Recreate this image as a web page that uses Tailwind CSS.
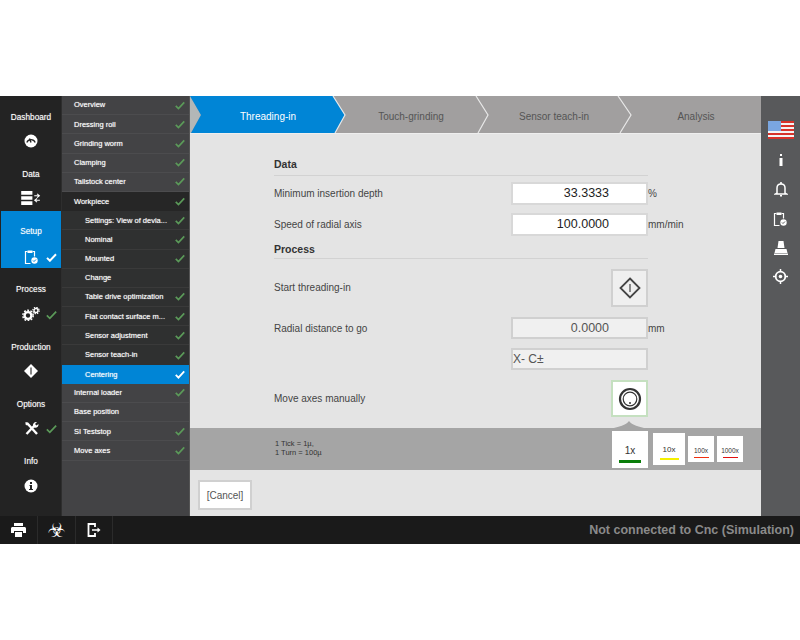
<!DOCTYPE html>
<html lang="en">

<head>
    <meta charset="UTF-8">
    <title>Threading-in</title>
    <script src="https://cdn.jsdelivr.net/npm/@tailwindcss/browser@4"></script>
</head>

<body class="bg-white font-['Liberation_Sans',Arial,sans-serif]">
    <main class="mt-[96px] w-[800px] h-[448px] flex flex-col">
        <div class="h-[420px] flex">
            <!-- main nav -->
            <nav class="w-[62px] bg-[#232323] text-white text-[8.250px] [text-shadow:0_0_1px_#ffffff80] flex flex-col pl-px border-r border-[#2e2e2e]">
                <div class="h-[57px] flex flex-col items-center pt-[15px]">
                    <span class="h-3 mt-px leading-3">Dashboard</span>
                    <svg class="mt-[10px]" width="14" height="14" viewBox="0 0 14 14"><circle cx="7" cy="7" r="6.500" fill="#fff"/><path d="M2.800 8.500A4.500 4.500 0 0 1 11.200 8.500" fill="none" stroke="#232323" stroke-width="1.200"/><path d="M7 8.500 L5.500 4.500" stroke="#232323" stroke-width="1.400"/></svg>
                </div>
                <div class="h-[57px] flex flex-col items-center pt-[15px]">
                    <span class="h-3 mt-px leading-3">Data</span>
                    <svg class="mt-[10px]" width="20" height="14" viewBox="0 0 21 15"><path d="M0 0h12v4H0zM0 5.500h12v4H0zM0 11h12v4H0z" fill="#fff"/><path d="M14 5h5M17 3l2.500 2-2.500 2M20 10h-5M17 8l-2.500 2 2.500 2" fill="none" stroke="#fff" stroke-width="1.100"/></svg>
                </div>
                <div class="h-[57px] mt-px bg-[#0085d6] flex flex-col items-center pt-[15px]">
                    <span class="h-3 leading-3">Setup</span>
                    <div class="mt-[11px] h-4 w-full relative flex justify-center">
                        <svg width="15" height="15" viewBox="0 0 15 15"><path d="M3.500 2.500H1.500v12h5M8.500 2.500h2v5" fill="none" stroke="#fff" stroke-width="1.200"/><path d="M3.500 1.500h5v2.500h-5z" fill="#fff"/><circle cx="10.500" cy="11.500" r="3.200" fill="#fff"/><path d="M9 11.500l1 1 2-2" fill="none" stroke="#0085d6" stroke-width="1"/></svg>
                        <svg class="absolute right-[4px] top-[4px]" width="11" height="9" viewBox="0 0 13 11"><path d="M1 6l3.500 3.500L12 1.500" fill="none" stroke="#fff" stroke-width="2.400"/></svg>
                    </div>
                </div>
                <div class="h-[56px] flex flex-col items-center pt-[16px]">
                    <span class="h-3 leading-3">Process</span>
                    <div class="mt-[11px] h-4 w-full relative flex justify-center">
                        <svg width="18" height="14" viewBox="0 0 18 14"><circle cx="6" cy="8.500" r="3.400" fill="none" stroke="#fff" stroke-width="2.400"/><circle cx="6" cy="8.500" r="5.200" fill="none" stroke="#fff" stroke-width="1.500" stroke-dasharray="1.800 1.500"/><circle cx="14" cy="3.500" r="2" fill="none" stroke="#fff" stroke-width="1.400"/><circle cx="14" cy="3.500" r="3.200" fill="none" stroke="#fff" stroke-width="1.200" stroke-dasharray="1.400 1.100"/></svg>
                        <svg class="absolute right-[4px] top-[3px]" width="11" height="10" viewBox="0 0 13 11"><path d="M1 6l3.500 3.500L12 1.500" fill="none" stroke="#5b9a59" stroke-width="2"/></svg>
                    </div>
                </div>
                <div class="h-[57px] flex flex-col items-center pt-[18px]">
                    <span class="h-3 leading-3">Production</span>
                    <svg class="mt-[10px]" width="14" height="14" viewBox="0 0 14 14"><path d="M7 0l7 7-7 7-7-7z" fill="#fff"/><path d="M7 3.500v7" stroke="#232323" stroke-width="1.100"/></svg>
                </div>
                <div class="h-[57px] flex flex-col items-center pt-[18px]">
                    <span class="h-3 leading-3">Options</span>
                    <div class="mt-[10px] h-4 w-full relative flex justify-center">
                        <svg width="15" height="15" viewBox="0 0 15 15"><path d="M3 2l10 11" stroke="#fff" stroke-width="2.400"/><path d="M1.500 1l2 .5 1 2-1.500 1-1.500-1z" fill="#fff"/><path d="M2.500 13L10 5" stroke="#fff" stroke-width="2.400"/><path d="M9 5c-.5-2.500 1.500-4.500 4-4l-2 2 1.500 1.500 2-1.500c.3 2.500-2 4.500-4.500 3.500z" fill="#fff"/></svg>
                        <svg class="absolute right-[4px] top-[3px]" width="11" height="10" viewBox="0 0 13 11"><path d="M1 6l3.500 3.500L12 1.500" fill="none" stroke="#5b9a59" stroke-width="2"/></svg>
                    </div>
                </div>
                <div class="h-[57px] flex flex-col items-center pt-[18px]">
                    <span class="h-3 leading-3">Info</span>
                    <svg class="mt-[11px]" width="14" height="14" viewBox="0 0 14 14"><circle cx="7" cy="7" r="6.500" fill="#fff"/><path d="M6 3h2v2H6zM5.500 6H8v4h1v1H5v-1h1V7h-.500z" fill="#232323"/></svg>
                </div>
            </nav>

            <!-- sub nav -->
            <aside class="w-[128px] bg-[#434345] text-white text-[7.500px] whitespace-nowrap [text-shadow:0_0_1px_#ffffffb0] border-r-[1px] border-[#555]">
                <div class="h-[19.200px] flex items-center justify-between pl-3 pr-[4px] border-b border-[#4c4c4e]"><span>Overview</span><svg width="10" height="9" viewBox="0 0 13 11"><path d="M1 6l3.500 3.500L12 1.500" fill="none" stroke="#5b9a59" stroke-width="2.200"/></svg></div>
                <div class="h-[19.200px] flex items-center justify-between pl-3 pr-[4px] border-b border-[#4c4c4e]"><span>Dressing roll</span><svg width="10" height="9" viewBox="0 0 13 11"><path d="M1 6l3.500 3.500L12 1.500" fill="none" stroke="#5b9a59" stroke-width="2.200"/></svg></div>
                <div class="h-[19.200px] flex items-center justify-between pl-3 pr-[4px] border-b border-[#4c4c4e]"><span>Grinding worm</span><svg width="10" height="9" viewBox="0 0 13 11"><path d="M1 6l3.500 3.500L12 1.500" fill="none" stroke="#5b9a59" stroke-width="2.200"/></svg></div>
                <div class="h-[19.200px] flex items-center justify-between pl-3 pr-[4px] border-b border-[#4c4c4e]"><span>Clamping</span><svg width="10" height="9" viewBox="0 0 13 11"><path d="M1 6l3.500 3.500L12 1.500" fill="none" stroke="#5b9a59" stroke-width="2.200"/></svg></div>
                <div class="h-[19.200px] flex items-center justify-between pl-3 pr-[4px] border-b border-[#4c4c4e]"><span>Tailstock center</span><svg width="10" height="9" viewBox="0 0 13 11"><path d="M1 6l3.500 3.500L12 1.500" fill="none" stroke="#5b9a59" stroke-width="2.200"/></svg></div>
                <div class="h-[19.200px] flex items-center justify-between pl-3 pr-[4px] bg-[#262626]"><span>Workpiece</span><svg width="10" height="9" viewBox="0 0 13 11"><path d="M1 6l3.500 3.500L12 1.500" fill="none" stroke="#5b9a59" stroke-width="2.200"/></svg></div>
                <div class="h-[19.200px] flex items-center justify-between pl-[23px] pr-[4px] bg-[#2f3030] border-b border-[#3a3a3a]"><span>Settings: View of devia...</span><svg width="10" height="9" viewBox="0 0 13 11"><path d="M1 6l3.500 3.500L12 1.500" fill="none" stroke="#5b9a59" stroke-width="2.200"/></svg></div>
                <div class="h-[19.200px] flex items-center justify-between pl-[23px] pr-[4px] bg-[#2f3030] border-b border-[#3a3a3a]"><span>Nominal</span><svg width="10" height="9" viewBox="0 0 13 11"><path d="M1 6l3.500 3.500L12 1.500" fill="none" stroke="#5b9a59" stroke-width="2.200"/></svg></div>
                <div class="h-[19.200px] flex items-center justify-between pl-[23px] pr-[4px] bg-[#2f3030] border-b border-[#3a3a3a]"><span>Mounted</span><svg width="10" height="9" viewBox="0 0 13 11"><path d="M1 6l3.500 3.500L12 1.500" fill="none" stroke="#5b9a59" stroke-width="2.200"/></svg></div>
                <div class="h-[19.200px] flex items-center justify-between pl-[23px] pr-[4px] bg-[#2f3030] border-b border-[#3a3a3a]"><span>Change</span></div>
                <div class="h-[19.200px] flex items-center justify-between pl-[23px] pr-[4px] bg-[#2f3030] border-b border-[#3a3a3a]"><span>Table drive optimization</span><svg width="10" height="9" viewBox="0 0 13 11"><path d="M1 6l3.500 3.500L12 1.500" fill="none" stroke="#5b9a59" stroke-width="2.200"/></svg></div>
                <div class="h-[19.200px] flex items-center justify-between pl-[23px] pr-[4px] bg-[#2f3030] border-b border-[#3a3a3a]"><span>Flat contact surface m...</span><svg width="10" height="9" viewBox="0 0 13 11"><path d="M1 6l3.500 3.500L12 1.500" fill="none" stroke="#5b9a59" stroke-width="2.200"/></svg></div>
                <div class="h-[19.200px] flex items-center justify-between pl-[23px] pr-[4px] bg-[#2f3030] border-b border-[#3a3a3a]"><span>Sensor adjustment</span><svg width="10" height="9" viewBox="0 0 13 11"><path d="M1 6l3.500 3.500L12 1.500" fill="none" stroke="#5b9a59" stroke-width="2.200"/></svg></div>
                <div class="h-[19.200px] flex items-center justify-between pl-[23px] pr-[4px] bg-[#2f3030]"><span>Sensor teach-in</span><svg width="10" height="9" viewBox="0 0 13 11"><path d="M1 6l3.500 3.500L12 1.500" fill="none" stroke="#5b9a59" stroke-width="2.200"/></svg></div>
                <div class="h-[19.200px] flex items-center justify-between pl-[23px] pr-[4px] bg-[#0085d6]"><span>Centering</span><svg width="10" height="9" viewBox="0 0 13 11"><path d="M1 6l3.500 3.500L12 1.500" fill="none" stroke="#fff" stroke-width="2.400"/></svg></div>
                <div class="h-[19.200px] flex items-center justify-between pl-3 pr-[4px] border-b border-[#4c4c4e]"><span>Internal loader</span><svg width="10" height="9" viewBox="0 0 13 11"><path d="M1 6l3.500 3.500L12 1.500" fill="none" stroke="#5b9a59" stroke-width="2.200"/></svg></div>
                <div class="h-[19.200px] flex items-center justify-between pl-3 pr-[4px] border-b border-[#4c4c4e]"><span>Base position</span></div>
                <div class="h-[19.200px] flex items-center justify-between pl-3 pr-[4px] border-b border-[#4c4c4e]"><span>SI Teststop</span><svg width="10" height="9" viewBox="0 0 13 11"><path d="M1 6l3.500 3.500L12 1.500" fill="none" stroke="#5b9a59" stroke-width="2.200"/></svg></div>
                <div class="h-[19.200px] flex items-center justify-between pl-3 pr-[4px] border-b border-[#4c4c4e]"><span>Move axes</span><svg width="10" height="9" viewBox="0 0 13 11"><path d="M1 6l3.500 3.500L12 1.500" fill="none" stroke="#5b9a59" stroke-width="2.200"/></svg></div>
            </aside>

            <!-- main area -->
            <section class="w-[571px] bg-[#e4e4e4] flex flex-col text-[10px] text-[#444]">
                <!-- tabs -->
                <div class="h-[38px] relative text-[#555] shrink-0">
                    <svg class="absolute inset-0" width="571" height="38" viewBox="0 0 571 38">
                        <rect width="571" height="37" fill="#a19f9f"/>
                        <path d="M0 0 L11 19 L1 37 L0 37Z" fill="#b3b7b7"/>
                        <path d="M0 0 H143 L155 19 L145 37 H1 L11 19Z" fill="#0085d6"/>
                        <path d="M143 0 L155 19 L145 37" fill="none" stroke="#e8e8e8" stroke-width="1.200"/>
                        <path d="M286 0 L298 19 L288 37" fill="none" stroke="#e8e8e8" stroke-width="1.200"/>
                        <path d="M428 0 L441 19 L430 37" fill="none" stroke="#e8e8e8" stroke-width="1.200"/>
                        <rect y="37" width="571" height="1" fill="#eee"/>
                    </svg>
                    <div class="relative h-[37px] pt-[3px] grid grid-cols-[156px_130px_156px_128px] items-center text-center">
                        <span class="text-white">Threading-in</span>
                        <span>Touch-grinding</span>
                        <span>Sensor teach-in</span>
                        <span>Analysis</span>
                    </div>
                </div>

                <!-- form -->
                <div class="h-[294px] pl-[84px] flex flex-col">
                    <h2 class="w-[374px] mt-[24px] h-[18px] text-[10.500px] font-bold text-[#333] border-b border-[#d2d2d2] leading-[12px]">Data</h2>
                    <div class="mt-[6px] h-[23px] flex items-center">
                        <span class="w-[237px]">Minimum insertion depth</span>
                        <div class="w-[137px] h-[23px] bg-white border-2 border-[#d8d8d8] text-[12.500px] text-[#222] flex items-center justify-end pr-[37px]">33.3333</div>
                        <span>%</span>
                    </div>
                    <div class="mt-[8px] h-[23px] flex items-center">
                        <span class="w-[237px]">Speed of radial axis</span>
                        <div class="w-[137px] h-[23px] bg-white border-2 border-[#d8d8d8] text-[12.500px] text-[#222] flex items-center justify-end pr-[37px]">100.0000</div>
                        <span>mm/min</span>
                    </div>
                    <h2 class="w-[374px] mt-[6px] h-[17px] text-[10.500px] font-bold text-[#333] border-b border-[#d2d2d2] leading-[14px]">Process</h2>
                    <div class="mt-[10px] h-[38px] flex items-center">
                        <span class="w-[337px] pb-px">Start threading-in</span>
                        <div class="w-[37px] h-[38px] bg-[#efefef] border-2 border-[#d0d0d0] flex items-center justify-center">
                            <svg width="22" height="22" viewBox="0 0 22 22"><path d="M11 1.500L20.500 11 11 20.500 1.500 11z" fill="none" stroke="#444" stroke-width="1.800"/><path d="M11 7v8" stroke="#444" stroke-width="1.200"/></svg>
                        </div>
                    </div>
                    <div class="mt-[10px] h-[22px] flex items-center">
                        <span class="w-[237px]">Radial distance to go</span>
                        <div class="w-[137px] h-[22px] bg-[#f0f0f0] border-2 border-[#d0d0d0] text-[12.500px] text-[#555] flex items-center justify-end pr-[37px]">0.0000</div>
                        <span>mm</span>
                    </div>
                    <div class="mt-[9px] h-[22px] flex">
                        <span class="w-[237px]"></span>
                        <div class="w-[137px] h-[22px] bg-[#f0f0f0] border-2 border-[#d0d0d0] text-[12px] text-[#555] flex items-center">X- C±</div>
                    </div>
                    <div class="mt-[10px] h-[37px] flex items-center">
                        <span class="w-[337px]">Move axes manually</span>
                        <div class="w-[37px] h-[37px] bg-white border-2 border-[#c5e0c0] flex items-center justify-center">
                            <svg width="24" height="24" viewBox="0 0 24 24"><circle cx="12" cy="12" r="10" fill="none" stroke="#333" stroke-width="2.200"/><circle cx="12" cy="12" r="6.800" fill="none" stroke="#333" stroke-width="1.200"/><circle cx="12" cy="16" r="1" fill="#333"/></svg>
                        </div>
                    </div>
                </div>

                <!-- increment bar -->
                <div class="h-[42px] bg-[#a5a5a5] relative flex items-center">
                    <svg class="absolute left-[421px] top-[-7px]" width="36" height="8" viewBox="0 0 36 8"><path d="M0 7.500C8 6 15 4 18 0 21 4 28 6 36 7.500V8H0z" fill="#a5a5a5"/></svg>
                    <div class="ml-[85px] w-[337px] mb-[3px] text-[7.500px] leading-[9px] text-[#333]">1 Tick = 1µ,<br>1 Turn = 100µ</div>
                    <div class="flex items-center">
                        <div class="w-[36px] h-[37px] bg-white flex flex-col items-center justify-end pb-[5px] text-[10px] text-[#333]"><span class="leading-3">1x</span><span class="mt-[3px] w-[22px] h-[2.500px] bg-[#0a7d0a]"></span></div>
                        <div class="ml-[5px] w-[32px] h-[32px] bg-white flex flex-col items-center justify-end pb-[5px] text-[8px] text-[#333]"><span class="leading-3">10x</span><span class="mt-[2px] w-[19px] h-[2px] bg-[#f5f000]"></span></div>
                        <div class="ml-[3px] w-[26px] h-[26px] bg-white flex flex-col items-center justify-end pb-[4px] text-[6.500px] text-[#333]"><span class="leading-[10px]">100x</span><span class="mt-[1px] w-[15px] h-[1.500px] bg-[#f03010]"></span></div>
                        <div class="ml-[3px] w-[26px] h-[26px] bg-white flex flex-col items-center justify-end pb-[4px] text-[6.500px] text-[#333]"><span class="leading-[10px]">1000x</span><span class="mt-[1px] w-[15px] h-[1.500px] bg-[#e01010]"></span></div>
                    </div>
                </div>

                <!-- footer -->
                <div class="flex-1 pl-2 pt-[10px]">
                    <div class="w-[54px] h-[30px] bg-white border-2 border-[#d0d0d0] text-[10px] text-[#555] flex items-center justify-center">[Cancel]</div>
                </div>
            </section>

            <!-- right column -->
            <aside class="w-[39px] bg-[#58595b] flex flex-col items-center pt-[25px]">
                <svg width="26" height="18" viewBox="0 0 26 18"><rect width="26" height="18" fill="#f4f4f4"/><path d="M0 0h26v2H0zM0 4h26v2H0zM0 8h26v2H0zM0 12h26v2H0zM0 16h26v2H0z" fill="#d8322a"/><rect width="13" height="10" fill="#7aa6e0"/></svg>
                <svg class="mt-[15px]" width="4" height="12" viewBox="0 0 4 12"><path d="M1 0h2v2H1zM.5 4h3v8h-3z" fill="#fff"/></svg>
                <svg class="mt-[16px]" width="14" height="15" viewBox="0 0 14 15"><path d="M3 11V6c0-2.500 1.500-4 4-4s4 1.500 4 4v5l1.500 1h-11z" fill="none" stroke="#fff" stroke-width="1.500"/><path d="M6 13h2v1.500H6zM6.200 0h1.600v2H6.200z" fill="#fff"/></svg>
                <svg class="mt-[14px]" width="15" height="15" viewBox="0 0 15 15"><path d="M3.500 2.500H1.500v12h5M8.500 2.500h2v5" fill="none" stroke="#fff" stroke-width="1.200"/><path d="M3.500 1.500h5v2.500h-5z" fill="#fff"/><circle cx="10.500" cy="11.500" r="3.200" fill="#fff"/><path d="M9 11.500l1 1 2-2" fill="none" stroke="#58595b" stroke-width="1"/></svg>
                <svg class="mt-[15px]" width="14" height="14" viewBox="0 0 14 14"><path d="M4.500 0h5l1 7h-7zM1.500 8h11l1 4h-13zM0 12.500h14V14H0z" fill="#fff"/></svg>
                <svg class="mt-[14px]" width="15" height="15" viewBox="0 0 15 15"><circle cx="7.500" cy="7.500" r="4.800" fill="none" stroke="#fff" stroke-width="1.800"/><circle cx="7.500" cy="7.500" r="1.800" fill="#fff"/><path d="M7.500 0v2.500M7.500 12.500V15M0 7.500h2.500M12.500 7.500H15" stroke="#fff" stroke-width="1.500"/></svg>
            </aside>
        </div>

        <!-- bottom bar -->
        <footer class="h-[28px] bg-[#1a1a1a] flex items-center">
            <div class="w-[38px] h-full flex items-center justify-center border-r border-[#2b2b2b]">
                <svg width="15" height="14" viewBox="0 0 15 14"><path d="M3 0h9v3H3zM1.500 4h12c.800 0 1.500.700 1.500 1.500V10h-3V8H3v2H0V5.500C0 4.700.700 4 1.500 4zM4 9h7v5H4z" fill="#fff"/></svg>
            </div>
            <div class="w-[38px] h-full flex items-center justify-center border-r border-[#2b2b2b] text-white text-[20px] leading-none font-['DejaVu_Sans',sans-serif]">☣</div>
            <div class="w-[37px] h-full flex items-center justify-center border-r border-[#2b2b2b]">
                <svg width="14" height="14" viewBox="0 0 14 14" fill="none" stroke="#fff"><path d="M8 4V1H1.500v12H8v-3" stroke-width="1.800"/><path d="M5 7h7" stroke-width="1.500"/><path d="M10.500 4.500L13.500 7l-3 2.500z" fill="#fff" stroke="none"/></svg>
            </div>
            <div class="flex-1 text-right pr-[6px] text-[12.500px] font-bold text-[#8a8a8a]">Not connected to Cnc (Simulation)</div>
        </footer>
    </main>
</body>

</html>
